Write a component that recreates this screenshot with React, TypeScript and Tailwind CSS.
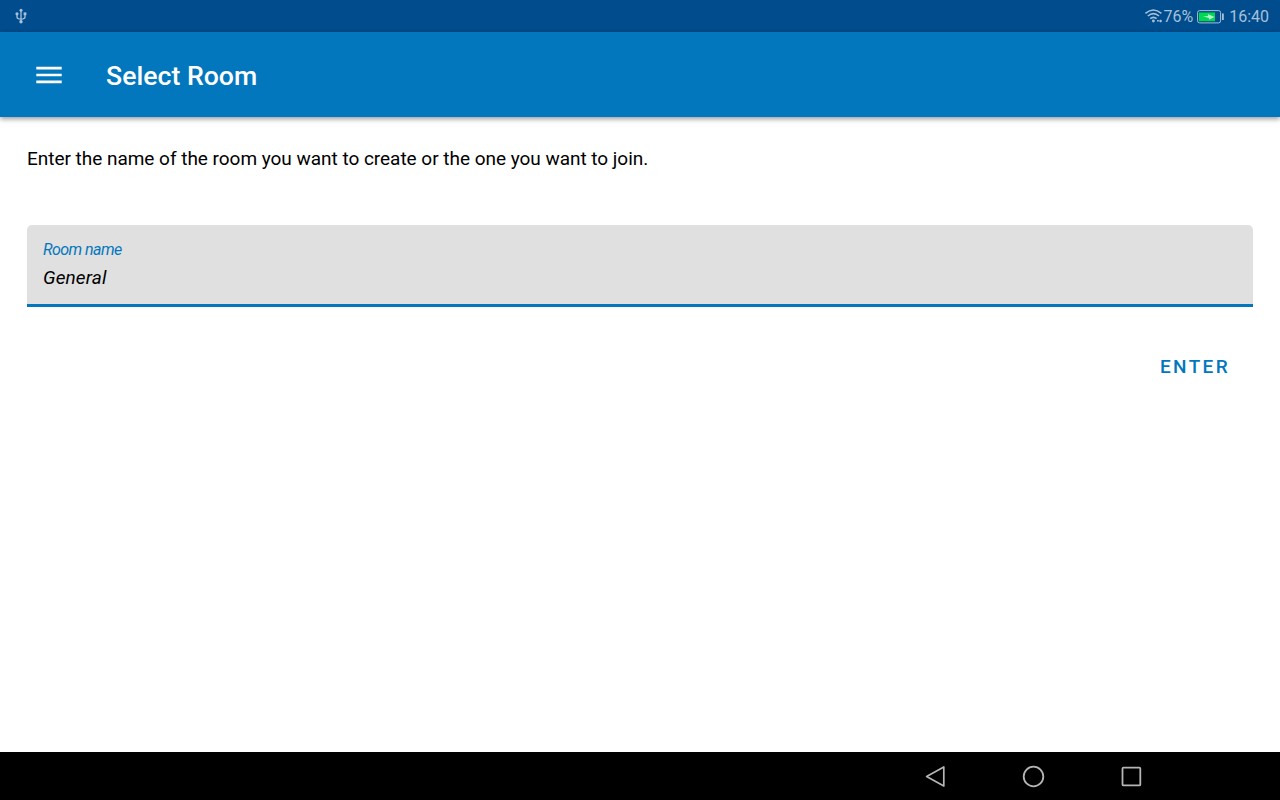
import { useState, type JSX } from "react";

function StatusBar(): JSX.Element {
    return (
        <div className="flex h-8 shrink-0 items-center justify-between bg-[#004c8c] pr-[11px] pl-[15px] text-[#a6c1da]">
            <svg width="12" height="16" viewBox="0 0 12 16" fill="currentColor">
                <path d="M6 2v12M2 6v3q0 2 4 2.2M10 6v3q0 2-4 2.2" fill="none" stroke="currentColor" strokeWidth="1.3" />
                <circle cx="6" cy="2.2" r="1.5" />
                <circle cx="2" cy="5.8" r="1.6" />
                <rect x="8.6" y="4.4" width="2.8" height="2.8" />
                <circle cx="6" cy="13.7" r="1.7" />
            </svg>
            <div className="flex items-center text-[16px] leading-8">
                <svg width="19" height="16" viewBox="0 0 19 16" fill="none" stroke="currentColor" strokeWidth="1.6">
                    <path d="M1.4 5.3q8-6.6 16 0M3.8 8q5.6-4.6 11.2 0M6.2 10.7q3.2-2.6 6.4 0" />
                    <circle cx="9.4" cy="13" r="1.4" fill="currentColor" stroke="none" />
                    <path d="M13 12.7h1.8M15.3 13h2.6M16.6 11.7v2.6" strokeWidth="1.4" />
                </svg>
                <span className="pt-[2px]">76%</span>
                <svg className="mr-[5px] ml-1 mt-[1px]" width="27" height="14" viewBox="0 0 27 14">
                    <rect x="0.6" y="0.6" width="23" height="12.3" rx="2" fill="none" stroke="#a6c1da" />
                    <rect x="2" y="2.5" width="16" height="8.7" fill="#00d94f" />
                    <path d="M6 6.3l5.2-.2-.5-2.2 6.8 3-5.3 2.8-.4-1.8z" fill="#b5f5cb" />
                    <rect x="25" y="3.5" width="1.8" height="6.5" fill="#a6c1da" />
                </svg>
                <span className="pt-[2px]">16:40</span>
            </div>
        </div>
    );
}

function AppBar(): JSX.Element {
    return (
        <header className="relative flex h-[85px] shrink-0 items-center bg-[#0277bd] pl-9 text-white shadow-[0_2px_5px_rgba(0,0,0,0.4)]">
            <button type="button" aria-label="Menu">
                <svg width="26" height="18" viewBox="0 0 26 18" fill="currentColor">
                    <path d="M.3.8h25.4v2.7H.3zM.3 7.7h25.4v2.6H.3zM.3 14.5h25.4v2.7H.3z" />
                </svg>
            </button>
            <h1 className="ml-11 pt-[3px] text-[26.67px] leading-8 font-medium">Select Room</h1>
        </header>
    );
}

function NavigationBar(): JSX.Element {
    return (
        <nav className="flex h-12 shrink-0 items-center justify-end gap-[74px] bg-black pr-[137px] text-[#b5b5b5]">
            <svg width="24" height="24" viewBox="0 0 24 24" fill="none" stroke="currentColor" strokeWidth="1.7" strokeLinejoin="round">
                <path d="M20.8 2.9v19L3.6 12.4z" />
            </svg>
            <svg width="24" height="24" viewBox="0 0 24 24" fill="none" stroke="currentColor" strokeWidth="1.8">
                <circle cx="12.5" cy="12.5" r="9.8" />
            </svg>
            <svg width="24" height="24" viewBox="0 0 24 24" fill="none" stroke="currentColor" strokeWidth="1.8">
                <rect x="3.5" y="3.6" width="17.8" height="17.8" rx="1" />
            </svg>
        </nav>
    );
}

export default function App(): JSX.Element {
    const [room, setRoom] = useState("General");

    return (
        <div className="flex h-screen flex-col overflow-hidden bg-white font-[Roboto,sans-serif]">
            <StatusBar />
            <AppBar />
            <main className="flex flex-1 flex-col px-[27px] pt-[30px]">
                <p className="text-[19px] leading-6 tracking-[-0.025px] text-black">
                    Enter the name of the room you want to create or the one you want to join.
                </p>
                <label className="mt-[54px] flex h-[82px] flex-col rounded-t-[5px] border-b-3 border-[#0277bd] bg-[#e0e0e0] px-4 pt-[14px] italic">
                    <span className="text-[16px] leading-[22px] tracking-[-0.55px] text-[#0277bd]">Room name</span>
                    <input
                        className="mt-[5px] h-6 w-full bg-transparent text-[19px] leading-6 tracking-[0.12px] text-black outline-none"
                        value={room}
                        onChange={(e) => setRoom(e.target.value)}
                    />
                </label>
                <button
                    type="button"
                    className="mt-9 mr-3 h-12 self-end px-[11px] text-[19px] font-medium tracking-[2.35px] text-[#0277bd]"
                >
                    ENTER
                </button>
            </main>
            <NavigationBar />
        </div>
    );
}
